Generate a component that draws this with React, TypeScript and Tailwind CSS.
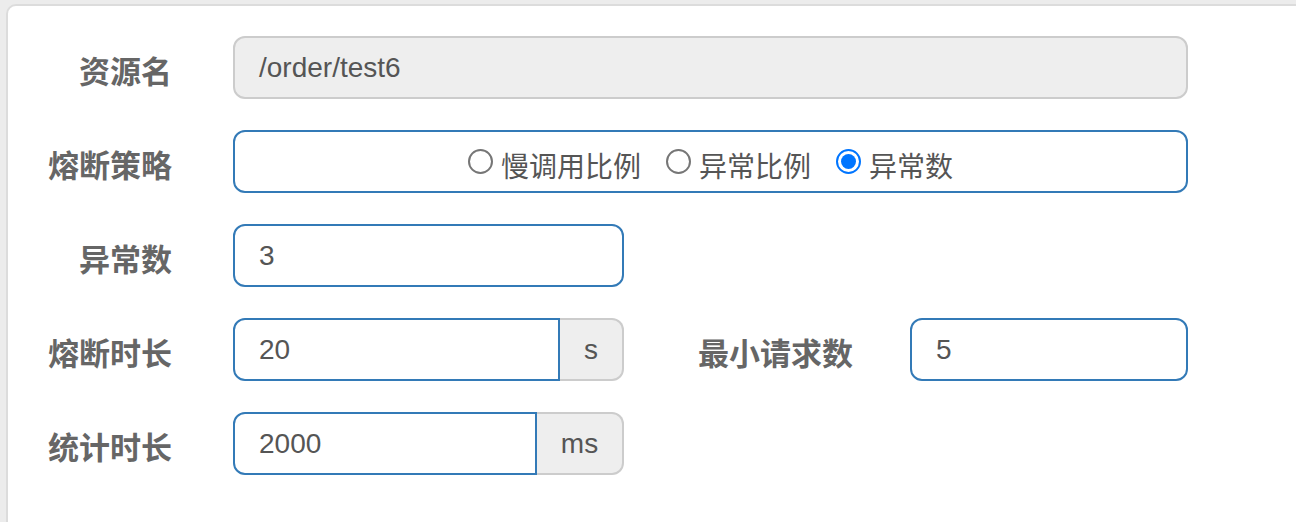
import React from "react";

const font = { fontFamily: '"Liberation Sans", "Noto Sans CJK SC", sans-serif' };

function Label({ text, className = "" }: { text: string; className?: string }) {
  return (
    <div className={"text-right text-[31px] font-bold text-[#666] leading-none pt-[10px] " + className}>
      {text}
    </div>
  );
}

function Radio({ checked, text }: { checked?: boolean; text: string }) {
  return (
    <label className="flex items-center">
      {checked ? (
        <span className="w-[25px] h-[25px] rounded-full border-2 border-[#0075ff] flex items-center justify-center">
          <span className="w-[15px] h-[15px] rounded-full bg-[#0075ff]" />
        </span>
      ) : (
        <span className="w-[25px] h-[25px] rounded-full border-2 border-[#767676] bg-white" />
      )}
      <span className="ml-[8px] text-[28px] text-[#555] leading-none pt-[13px]">{text}</span>
    </label>
  );
}

export default function App() {
  return (
    <div className="h-[522px] overflow-hidden bg-[#ececec] pl-[6px] pt-[4px]" style={font}>
      <div className="w-[1320px] h-[560px] bg-white border-2 border-[#dcdcdc] rounded-[10px] pt-[30px]">
        <div className="flex flex-col gap-[31px]">
          {/* 资源名 */}
          <div className="flex items-center h-[63px]">
            <Label text="资源名" className="w-[164px]" />
            <div className="ml-[61px] w-[955px] h-[63px] rounded-[12px] border-2 border-[#cccccc] bg-[#eeeeee] flex items-center px-[24px] text-[28px] text-[#555]">
              /order/test6
            </div>
          </div>

          {/* 熔断策略 */}
          <div className="flex items-center h-[63px]">
            <Label text="熔断策略" className="w-[164px]" />
            <div className="ml-[61px] w-[955px] h-[63px] rounded-[12px] border-2 border-[#337ab7] flex items-center justify-center gap-[25px]">
              <Radio text="慢调用比例" />
              <Radio text="异常比例" />
              <Radio checked text="异常数" />
            </div>
          </div>

          {/* 异常数 */}
          <div className="flex items-center h-[63px]">
            <Label text="异常数" className="w-[164px]" />
            <div className="ml-[61px] w-[391px] h-[63px] rounded-[12px] border-2 border-[#337ab7] flex items-center px-[24px] text-[28px] text-[#555]">
              3
            </div>
          </div>

          {/* 熔断时长 / 最小请求数 */}
          <div className="flex items-center h-[63px]">
            <Label text="熔断时长" className="w-[164px]" />
            <div className="ml-[61px] flex h-[63px]">
              <div className="w-[327px] h-full rounded-l-[12px] border-2 border-[#337ab7] flex items-center px-[24px] text-[28px] text-[#555]">
                20
              </div>
              <div className="w-[64px] h-full rounded-r-[12px] border-2 border-l-0 border-[#cccccc] bg-[#eeeeee] flex items-center justify-center text-[28px] text-[#555]">
                s
              </div>
            </div>
            <Label text="最小请求数" className="w-[229px]" />
            <div className="ml-[57px] w-[278px] h-[63px] rounded-[12px] border-2 border-[#337ab7] flex items-center px-[24px] text-[28px] text-[#555]">
              5
            </div>
          </div>

          {/* 统计时长 */}
          <div className="flex items-center h-[63px]">
            <Label text="统计时长" className="w-[164px]" />
            <div className="ml-[61px] flex h-[63px]">
              <div className="w-[304px] h-full rounded-l-[12px] border-2 border-[#337ab7] flex items-center px-[24px] text-[28px] text-[#555]">
                2000
              </div>
              <div className="w-[87px] h-full rounded-r-[12px] border-2 border-l-0 border-[#cccccc] bg-[#eeeeee] flex items-center justify-center text-[28px] text-[#555]">
                ms
              </div>
            </div>
          </div>
        </div>
      </div>
    </div>
  );
}
